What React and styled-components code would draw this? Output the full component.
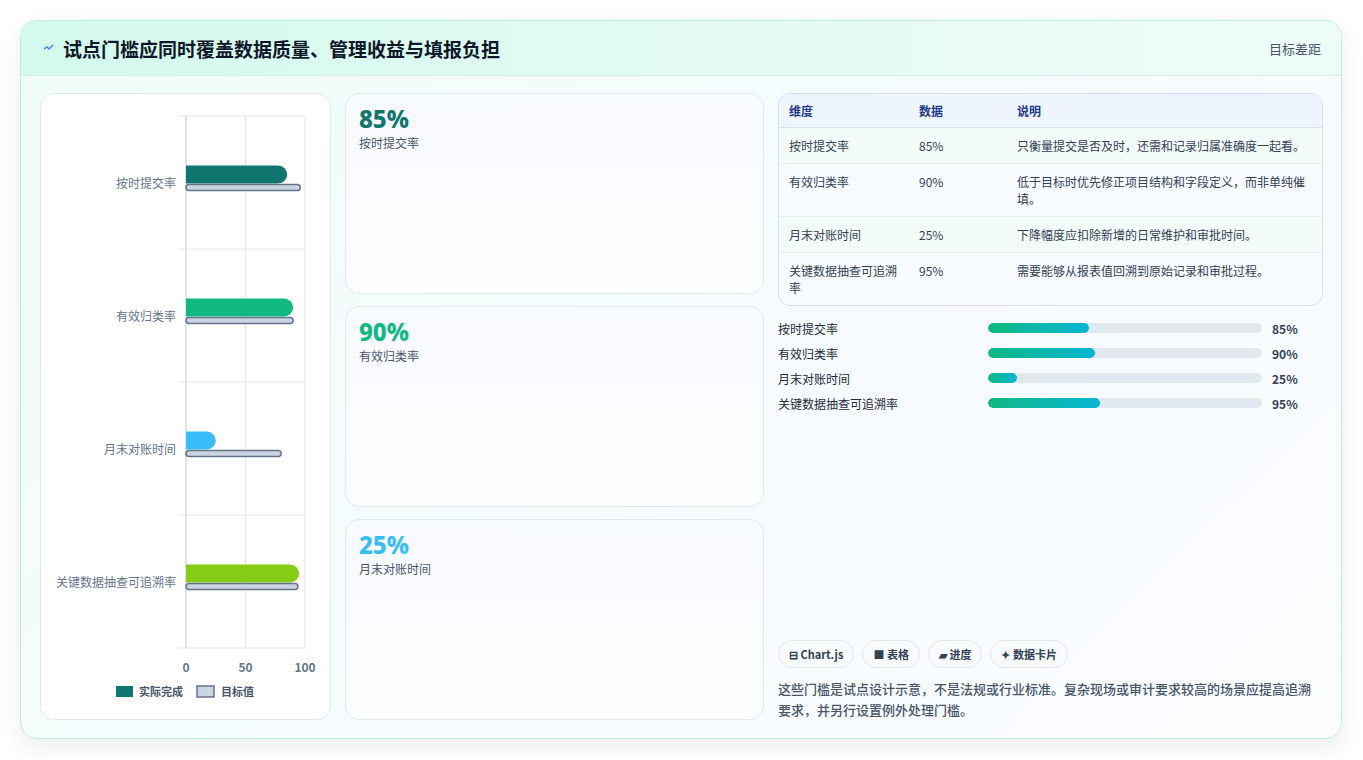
import React from "react";
import styled, { createGlobalStyle } from "styled-components";

const Global = createGlobalStyle`
  html,body{margin:0;padding:0;background:#fff;}
  body{font-family:"Noto Sans CJK SC","Noto Sans",sans-serif;color:#1e293b;}
`;
const Page = styled.div`padding:20px 21px 20px 20px;`;
const Shell = styled.div`
  height:719px;box-sizing:border-box;border:1px solid #bfeee0;border-radius:16px;overflow:hidden;
  background:linear-gradient(135deg,#effdf7 0%,#f7fbff 60%,#fbfdff 100%);
  box-shadow:0 8px 24px rgba(15,23,42,0.08);display:flex;flex-direction:column;
`;
const Header = styled.div`
  height:55px;box-sizing:border-box;display:flex;align-items:center;justify-content:space-between;
  padding:0 20px 0 22px;background:linear-gradient(90deg,#d3faec,#e6fbf5 60%,#eefcf8);
  border-bottom:1px solid #d6efe8;
`;
const Title = styled.h1`margin:0;font-size:19px;font-weight:700;color:#0f172a;display:flex;align-items:center;gap:8px;`;
const Side = styled.span`font-size:13px;color:#475569;`;
const Body = styled.div`flex:1;display:grid;grid-template-columns:291px 419px 1fr;gap:14px;padding:17px 18px 18px 19px;min-height:0;`;
const Panel = styled.div`background:#fff;border:1px solid #dfe9ee;border-radius:14px;`;
const ChartPanel = styled(Panel)`overflow:hidden;display:flex;flex-direction:column;`;
const Cards = styled.div`display:grid;grid-template-rows:repeat(3,1fr);gap:12px;`;
const Card = styled(Panel)`background:linear-gradient(180deg,#f7faff,#fdfeff);padding:11px 13px;`;
const Big = styled.div`font-size:24px;font-weight:800;color:${p=>p.c};line-height:28px;font-family:"Noto Sans","Open Sans",sans-serif;`;
const Sub = styled.div`font-size:12px;color:#475569;margin-top:1px;`;
const Right = styled.div`display:flex;flex-direction:column;`;
const Table = styled.table`
  width:100%;border-collapse:separate;border-spacing:0;border:1px solid #d5e0ea;border-radius:12px;overflow:hidden;
  font-size:12px;background:#f8fbff;
  th{background:#eef5ff;color:#1e3a8a;font-weight:700;text-align:left;padding:8px 10px;border-bottom:1px solid #d5e0ea;height:17px;}
  td{padding:9px 10px;color:#334155;vertical-align:top;border-bottom:1px solid #e6edf3;line-height:17px;}
  tr:nth-child(odd) td{background:#f3fcf8;}
  tr:last-child td{border-bottom:none;}
`;
const Bars = styled.div`display:flex;flex-direction:column;gap:7px;margin-top:13px;`;
const BarRow = styled.div`display:grid;grid-template-columns:200px 274px 1fr;align-items:center;column-gap:10px;font-size:12px;height:18px;`;
const Track = styled.div`height:10px;border-radius:5px;background:#e2e8f0;overflow:hidden;`;
const Fill = styled.div`height:100%;border-radius:5px;background:linear-gradient(90deg,#10b981,#06b6d4);`;
const Val = styled.span`font-weight:700;color:#334155;`;
const Spacer = styled.div`flex:1;`;
const Chips = styled.div`display:flex;gap:8px;`;
const Chip = styled.span`border:1px solid #e2e8f0;background:#f8fafc;border-radius:15px;padding:5px 10px;font-size:11px;font-weight:700;color:#334155;`;
const Note = styled.p`margin:10px 0 0;font-size:13px;color:#475569;line-height:21px;font-weight:500;`;

const cats=[["按时提交率",85,96,"#0f766e"],["有效归类率",90,90,"#10b981"],["月末对账时间",25,80,"#38bdf8"],["关键数据抽查可追溯率",95,94,"#84cc16"]];

function Chart(){
  const x0=145,w=119,top=22,rh=133;
  const sx=v=>x0+v/100*w;
  return (
    <svg width="291" height="628" style={{display:"block"}}>
      {[0,50,100].map(v=><line key={v} x1={sx(v)} x2={sx(v)} y1={top} y2={top+rh*4} stroke="#e5e7eb"/>)}
      {[0,1,2,3,4].map(i=><line key={i} x1={x0-8} x2={sx(100)} y1={top+rh*i} y2={top+rh*i} stroke="#e5e7eb"/>)}
      <line x1={x0} x2={x0} y1={top} y2={top+rh*4} stroke="#cbd5e1"/>
      {cats.map(([n,a,t,c],i)=>{const cy=top+rh*i+rh/2;return(
        <g key={n}>
          <text x={x0-10} y={cy+5} textAnchor="end" fontSize="12" fill="#64748b">{n}</text>
          <path d={`M${x0} ${cy-17}H${sx(a)-9}a9 9 0 0 1 0 18H${x0}Z`} fill={c}/>
          <rect x={x0} y={cy+2} width={sx(t)-x0} height={6} rx="3" fill="#cbd5e1" stroke="#64748b" strokeWidth="1.5"/>
        </g>)})}
      {[0,50,100].map(v=><text key={v} x={sx(v)} y={top+rh*4+24} textAnchor="middle" fontSize="12" fontWeight="700" fill="#64748b">{v}</text>)}
      <rect x="75" y="592" width="17" height="11" fill="#0f766e"/>
      <text x="98" y="602" fontSize="11" fontWeight="700" fill="#475569">实际完成</text>
      <rect x="156" y="592" width="17" height="11" fill="#cbd5e1" stroke="#64748b" strokeWidth="1.5"/>
      <text x="180" y="602" fontSize="11" fontWeight="700" fill="#475569">目标值</text>
    </svg>);
}

export default function App(){
  return (<><Global/><Page><Shell>
    <Header>
      <Title><svg width="12" height="10" viewBox="0 0 12 10"><path d="M1 6l3-2 2 2 4-4" stroke="#3b82f6" strokeWidth="1.5" fill="none"/></svg>试点门槛应同时覆盖数据质量、管理收益与填报负担</Title>
      <Side>目标差距</Side>
    </Header>
    <Body>
      <ChartPanel><Chart/></ChartPanel>
      <Cards>
        <Card><Big c="#0f766e">85%</Big><Sub>按时提交率</Sub></Card>
        <Card><Big c="#10b981">90%</Big><Sub>有效归类率</Sub></Card>
        <Card><Big c="#38bdf8">25%</Big><Sub>月末对账时间</Sub></Card>
      </Cards>
      <Right>
        <Table>
          <colgroup><col style={{width:"130px"}}/><col style={{width:"98px"}}/><col/></colgroup>
          <thead><tr><th>维度</th><th>数据</th><th>说明</th></tr></thead>
          <tbody>
            <tr><td>按时提交率</td><td>85%</td><td>只衡量提交是否及时，还需和记录归属准确度一起看。</td></tr>
            <tr><td>有效归类率</td><td>90%</td><td>低于目标时优先修正项目结构和字段定义，而非单纯催填。</td></tr>
            <tr><td>月末对账时间</td><td>25%</td><td>下降幅度应扣除新增的日常维护和审批时间。</td></tr>
            <tr><td>关键数据抽查可追溯率</td><td>95%</td><td>需要能够从报表值回溯到原始记录和审批过程。</td></tr>
          </tbody>
        </Table>
        <Bars>
          {[["按时提交率",85,37],["有效归类率",90,39],["月末对账时间",25,10.5],["关键数据抽查可追溯率",95,41]].map(([n,v,f])=>(
            <BarRow key={n}><span>{n}</span><Track><Fill style={{width:f+"%"}}/></Track><Val>{v}%</Val></BarRow>))}
        </Bars>
        <Spacer/>
        <Chips><Chip>⊟ Chart.js</Chip><Chip>■ 表格</Chip><Chip>▰ 进度</Chip><Chip>✦ 数据卡片</Chip></Chips>
        <Note>这些门槛是试点设计示意，不是法规或行业标准。复杂现场或审计要求较高的场景应提高追溯要求，并另行设置例外处理门槛。</Note>
      </Right>
    </Body>
  </Shell></Page></>);
}
